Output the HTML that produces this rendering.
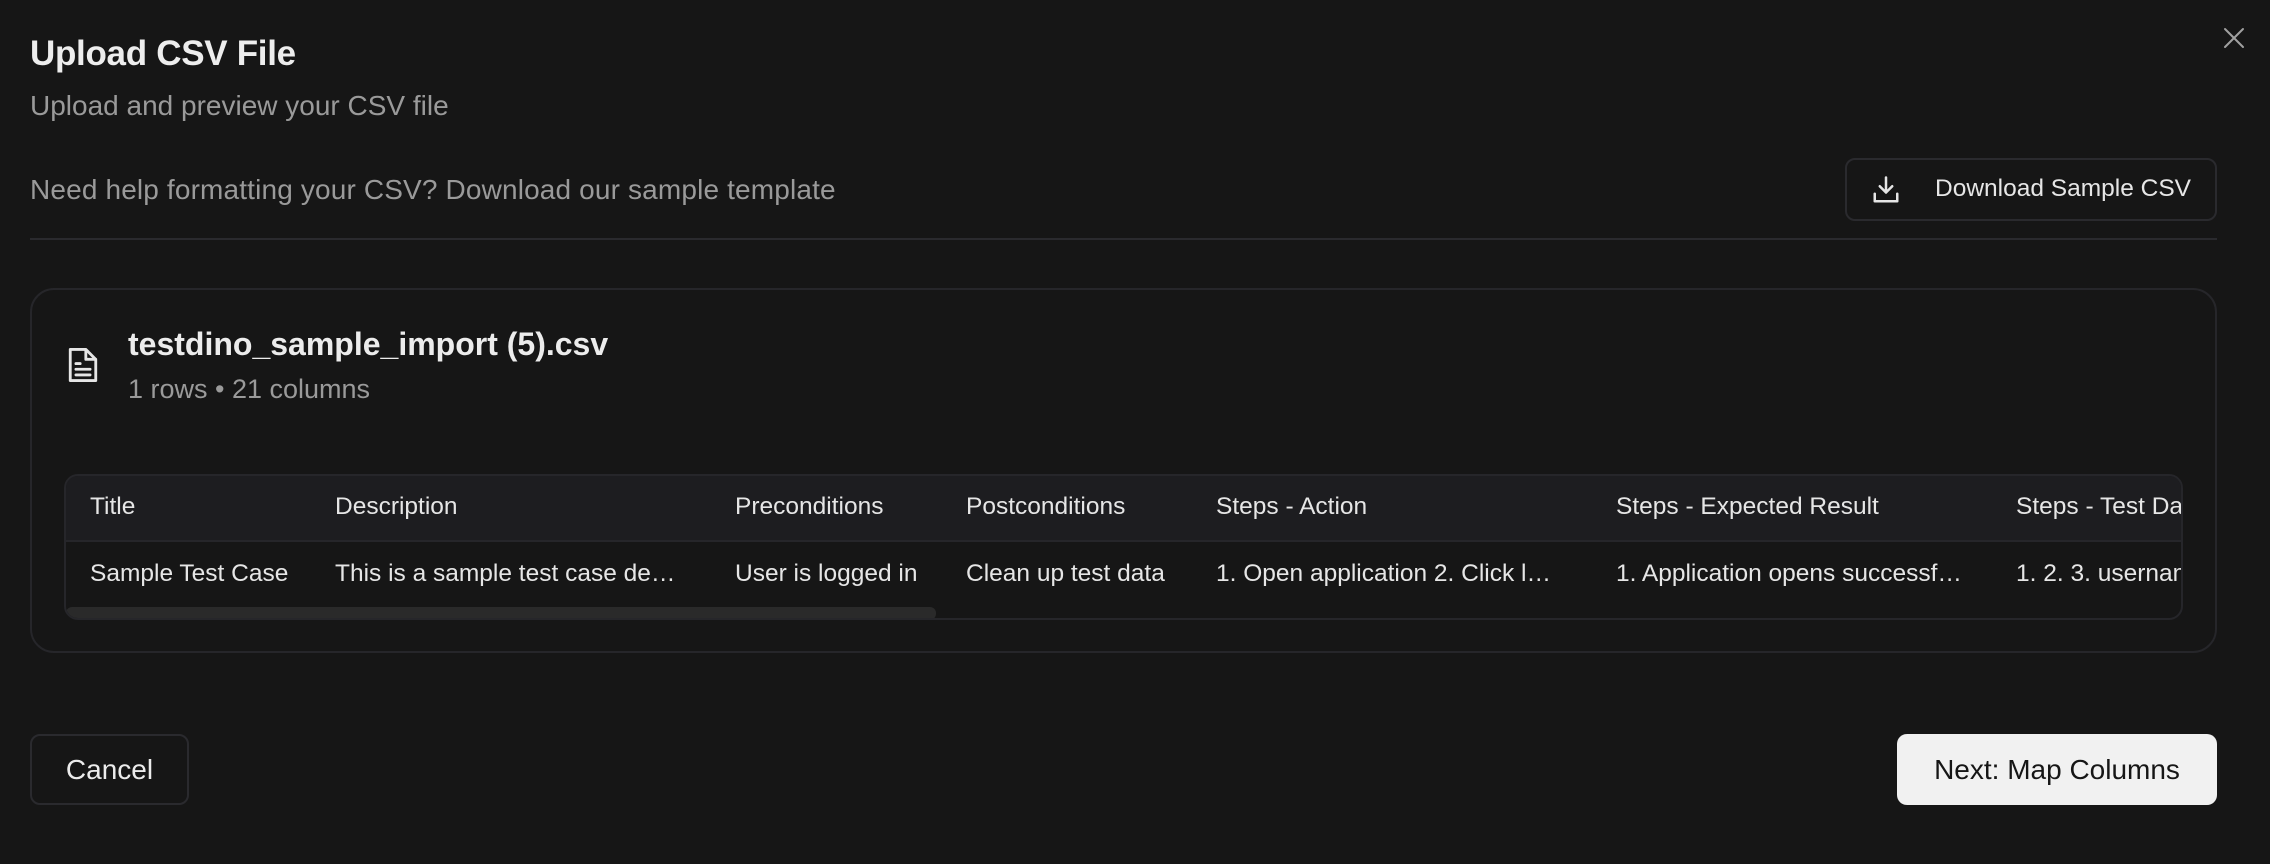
<!DOCTYPE html>
<html><head><style>
*{margin:0;padding:0;box-sizing:border-box}
body{width:2270px;height:864px;background:#161616;font-family:"Liberation Sans",sans-serif;color:#ececec;position:relative;overflow:hidden}
.a{position:absolute;white-space:nowrap}
.t{font-size:24.5px;color:#e6e6e6}
.e{overflow:hidden;text-overflow:ellipsis}
</style></head><body>
<div class="a" style="left:30px;top:34px;font-size:35px;font-weight:600;letter-spacing:-0.3px;color:#ededed">Upload CSV File</div>
<div class="a" style="left:30px;top:90px;font-size:28px;color:#9a9a9a">Upload and preview your CSV file</div>
<svg class="a" style="left:2222px;top:26px" width="24" height="24" viewBox="0 0 24 24" fill="none" stroke="#a0a0a0" stroke-width="2" stroke-linecap="round"><path d="M3 3L21 21M21 3L3 21"/></svg>
<div class="a" style="left:30px;top:174px;font-size:28px;color:#9a9a9a;letter-spacing:0.15px">Need help formatting your CSV? Download our sample template</div>
<div class="a" style="left:1845px;top:158px;width:372px;height:63px;border:2px solid #2a2a2e;border-radius:10px"></div>
<svg class="a" style="left:1871px;top:175px" width="30" height="30" viewBox="0 0 24 24" fill="none" stroke="#e6e6e6" stroke-width="2" stroke-linecap="round" stroke-linejoin="round"><path d="M12 2v12M7 9l5 5 5-5M3 15v6h18v-6"/></svg>
<div class="a" style="left:1935px;top:175px;font-size:24.5px;color:#e6e6e6">Download Sample CSV</div>
<div class="a" style="left:30px;top:238px;width:2187px;height:2px;background:#2a2a2e"></div>
<div class="a" style="left:30px;top:288px;width:2187px;height:365px;border:2px solid #26262a;border-radius:24px"></div>
<svg class="a" style="left:66px;top:346px" width="34" height="38" viewBox="0 0 24 26" fill="none" stroke="#e6e6e6" stroke-width="2" stroke-linejoin="round" stroke-linecap="round"><path d="M3 2h11l7 7v15H3zM14 2v7h7M7 12h3M7 16h10M7 20h10"/></svg>
<div class="a" style="left:128px;top:326px;font-size:32px;font-weight:600;color:#ececec">testdino_sample_import (5).csv</div>
<div class="a" style="left:128px;top:374px;font-size:27px;color:#9a9a9a">1 rows • 21 columns</div>
<div class="a" style="left:64px;top:474px;width:2119px;height:146px;border:2px solid #26262a;border-radius:14px;overflow:hidden;background:#161616">
 <div style="position:absolute;left:0;top:0;width:100%;height:66px;background:#1d1d20;border-bottom:2px solid #26262a"></div>
 <div style="position:absolute;left:0;top:131px;width:870px;height:13px;background:#2a2a2a;border-radius:6px"></div>
</div>
<div class="a t" style="left:90px;top:493px">Title</div>
<div class="a t" style="left:335px;top:493px">Description</div>
<div class="a t" style="left:735px;top:493px">Preconditions</div>
<div class="a t" style="left:966px;top:493px">Postconditions</div>
<div class="a t" style="left:1216px;top:493px">Steps - Action</div>
<div class="a t" style="left:1616px;top:493px">Steps - Expected Result</div>
<div class="a t" style="left:2016px;top:493px;width:165px;overflow:hidden">Steps - Test Data</div>
<div class="a t" style="left:90px;top:560px">Sample Test Case</div>
<div class="a t e" style="left:335px;top:560px;width:342px">This is a sample test case description</div>
<div class="a t" style="left:735px;top:560px">User is logged in</div>
<div class="a t" style="left:966px;top:560px">Clean up test data</div>
<div class="a t e" style="left:1216px;top:560px;width:347px">1. Open application 2. Click login button</div>
<div class="a t e" style="left:1616px;top:560px;width:348px">1. Application opens successfully 2.</div>
<div class="a t" style="left:2016px;top:560px;width:165px;overflow:hidden">1. 2. 3. username</div>
<div class="a" style="left:30px;top:734px;width:159px;height:71px;border:2px solid #2a2a2e;border-radius:10px;font-size:28px;color:#ececec;text-align:center;line-height:67px">Cancel</div>
<div class="a" style="left:1897px;top:734px;width:320px;height:71px;background:#f1f1f1;border-radius:10px;font-size:28px;color:#161616;text-align:center;line-height:71px">Next: Map Columns</div>
</body></html>
